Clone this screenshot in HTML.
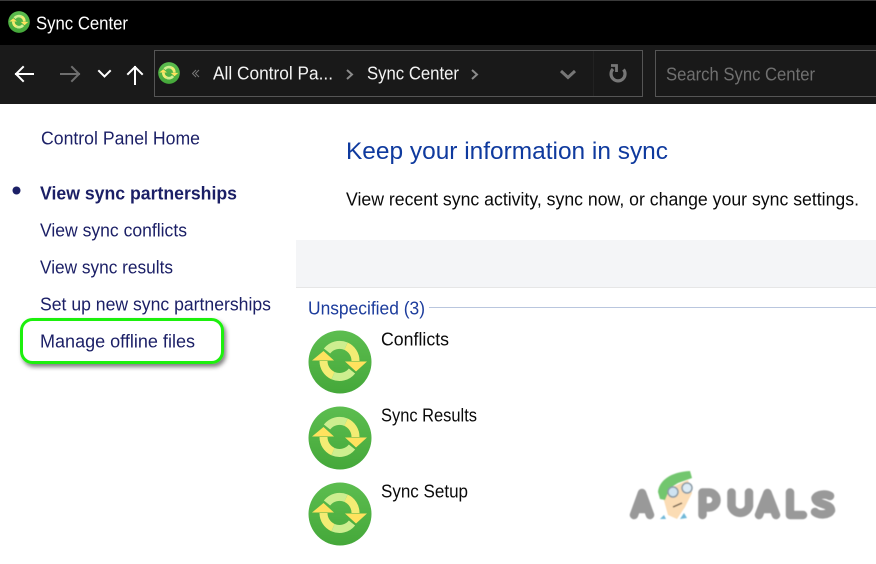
<!DOCTYPE html>
<html><head><meta charset="utf-8"><title>Sync Center</title>
<style>
html,body{margin:0;padding:0;background:#fff;width:876px;height:564px;overflow:hidden}
svg{display:block}
text{font-family:"Liberation Sans",sans-serif;font-size:18px;fill:#1b1f66}
</style></head><body>
<svg width="876" height="564" viewBox="0 0 876 564" xmlns="http://www.w3.org/2000/svg">
<defs>
<linearGradient id="g" x1="0" y1="0" x2="0" y2="1"><stop offset="0" stop-color="#5cbd4f"/><stop offset="1" stop-color="#45a83a"/></linearGradient>
<filter id="sh" x="-20%" y="-30%" width="140%" height="170%"><feDropShadow dx="2" dy="3" stdDeviation="2.2" flood-color="#000" flood-opacity=".5"/></filter>
<filter id="bl"><feGaussianBlur stdDeviation=".5"/></filter>
<symbol id="sync" viewBox="0 0 64 64">
<circle cx="32" cy="32" r="31.500" fill="url(#g)"/>
<g fill="none" stroke-width="8">
<path d="M19 21A16 16 0 0 1 38 16.200" stroke="#cdee8f"/>
<path d="M38 16.200A16 16 0 0 1 47.500 31" stroke="#f3ec74"/>
<path d="M15.500 31A16 16 0 0 0 25 45.600" stroke="#f3ec74"/>
<path d="M25 45.600A16 16 0 0 0 44 41" stroke="#cdee8f"/>
</g>
<path d="M4 30.500L15.500 21 26 30.500Z" fill="#ffe25e"/>
<path d="M37 31.500H59L48 41.500Z" fill="#ffe25e"/>
</symbol>
</defs>

<rect width="876" height="45" fill="#000"/>
<rect width="876" height="1" fill="#3a3a3a"/>
<rect y="45" width="876" height="59" fill="#1a1a1a"/>
<use href="#sync" x="8" y="11" width="22" height="22"/>
<text x="36" y="29.500" style="fill:#fff" textLength="92" lengthAdjust="spacingAndGlyphs">Sync Center</text>

<g fill="none" stroke-linecap="square">
<path d="M16 74H33M23 67L16 74 23 81" stroke="#fff" stroke-width="2"/>
<path d="M61 74H79M72 67L79 74 72 81" stroke="#6e6e6e" stroke-width="2"/>
<path d="M99 71L104.500 76.500 110 71" stroke="#fff" stroke-width="2"/>
<path d="M135 84V67M128 74L135 67 142 74" stroke="#fff" stroke-width="2"/>
</g>

<rect x="154.500" y="50.500" width="488" height="46" fill="#191919" stroke="#555"/>
<rect x="655.500" y="50.500" width="222" height="46" fill="#191919" stroke="#555"/>
<path d="M593.500 51V96" stroke="#222"/>
<use href="#sync" x="158" y="62" width="22" height="22"/>
<path d="M196 70L192.500 73.500 196 77M199 70L195.500 73.500 199 77" fill="none" stroke="#777" stroke-width="1"/>
<text x="213" y="79.500" style="fill:#f4f4f4" textLength="120" lengthAdjust="spacingAndGlyphs">All Control Pa...</text>
<path d="M347 70L352 74.500 347 79" fill="none" stroke="#8a8a8a" stroke-width="2"/>
<text x="367" y="79.500" style="fill:#f4f4f4" textLength="92" lengthAdjust="spacingAndGlyphs">Sync Center</text>
<path d="M472 70L477 74.500 472 79" fill="none" stroke="#8a8a8a" stroke-width="2"/>
<path d="M561 71L568 77.500 575 71" fill="none" stroke="#777" stroke-width="3"/>
<path d="M623.500 69.500A7 7 0 1 1 613 69" fill="none" stroke="#777" stroke-width="3.200"/>
<path d="M611 65.500H616.500V72" fill="none" stroke="#777" stroke-width="2.800"/>
<text x="666" y="80.500" style="fill:#707070" textLength="149" lengthAdjust="spacingAndGlyphs">Search Sync Center</text>

<text x="41" y="144.500" textLength="159" lengthAdjust="spacingAndGlyphs">Control Panel Home</text>
<circle cx="16.500" cy="190.500" r="4" fill="#1b1f66"/>
<text x="40" y="199.500" style="font-weight:bold" textLength="197" lengthAdjust="spacingAndGlyphs">View sync partnerships</text>
<text x="40" y="236.500" textLength="147" lengthAdjust="spacingAndGlyphs">View sync conflicts</text>
<text x="40" y="273.500" textLength="133" lengthAdjust="spacingAndGlyphs">View sync results</text>
<text x="40" y="310.500" textLength="231" lengthAdjust="spacingAndGlyphs">Set up new sync partnerships</text>
<rect x="21.500" y="319.500" width="201" height="43" rx="11" fill="#fff" stroke="#1ff00f" stroke-width="3" filter="url(#sh)"/>
<text x="40" y="347.500" textLength="155" lengthAdjust="spacingAndGlyphs">Manage offline files</text>

<text x="346" y="159" style="font-size:24px;fill:#0f3a9e" textLength="322" lengthAdjust="spacingAndGlyphs">Keep your information in sync</text>
<text x="346" y="205.500" style="fill:#0a0a0a" textLength="513" lengthAdjust="spacingAndGlyphs">View recent sync activity, sync now, or change your sync settings.</text>
<rect x="296" y="240" width="580" height="47" fill="#f4f5f7"/>
<rect x="296" y="287" width="580" height="1" fill="#e6e6e6"/>
<text x="308" y="314.500" style="fill:#1c3c9c" textLength="117" lengthAdjust="spacingAndGlyphs">Unspecified (3)</text>
<rect x="429" y="307" width="447" height="1" fill="#b9c6de"/>

<use href="#sync" x="308" y="330" width="64" height="64"/>
<use href="#sync" x="308" y="406" width="64" height="64"/>
<use href="#sync" x="308" y="482" width="64" height="64"/>
<text x="381" y="345.500" style="fill:#0a0a0a" textLength="68" lengthAdjust="spacingAndGlyphs">Conflicts</text>
<text x="381" y="421.500" style="fill:#0a0a0a" textLength="96" lengthAdjust="spacingAndGlyphs">Sync Results</text>
<text x="381" y="497.500" style="fill:#0a0a0a" textLength="87" lengthAdjust="spacingAndGlyphs">Sync Setup</text>

<g filter="url(#bl)">
<g fill="none" stroke="#999" stroke-width="8.500" stroke-linecap="round" stroke-linejoin="round">
<path d="M634 515L642 493 650 515M638 509H647"/>
<path d="M702.500 515V492.500H709A7.500 7.500 0 0 1 709 507.500H702.500"/>
<path d="M731.500 492.500V506A9 9 0 0 0 749 506V492.500"/>
<path d="M759 515L767.500 493 776 515M763 509H772"/>
<path d="M790 492.500V515H803"/>
<path d="M830 496A9 5.500 0 0 0 815.500 498C815.500 505 831 503 831 510.500A9 5.500 0 0 1 815 512"/>
</g>
<path d="M663 497L670 488 688 480 692 493 685 507 677 519 668 515Z" fill="#fbdcb4"/>
<path d="M658 492C659 481 670 472 690 471L692 478 678 483 670 488 665 500 660 499Z" fill="#72c66e"/>
<circle cx="673" cy="492" r="5" fill="#cfe3f2" stroke="#8a9aa5" stroke-width="1.500"/>
<circle cx="687" cy="488" r="5" fill="#dcebf5" stroke="#8a9aa5" stroke-width="1.500"/>
<path d="M673 507L682 503" stroke="#6b5a4a" stroke-width="1.500"/>
<path d="M660 519L664 515 666 519ZM680 519L684 513 687 518Z" fill="#6fb8d8"/>
</g>
</svg>
</body></html>
